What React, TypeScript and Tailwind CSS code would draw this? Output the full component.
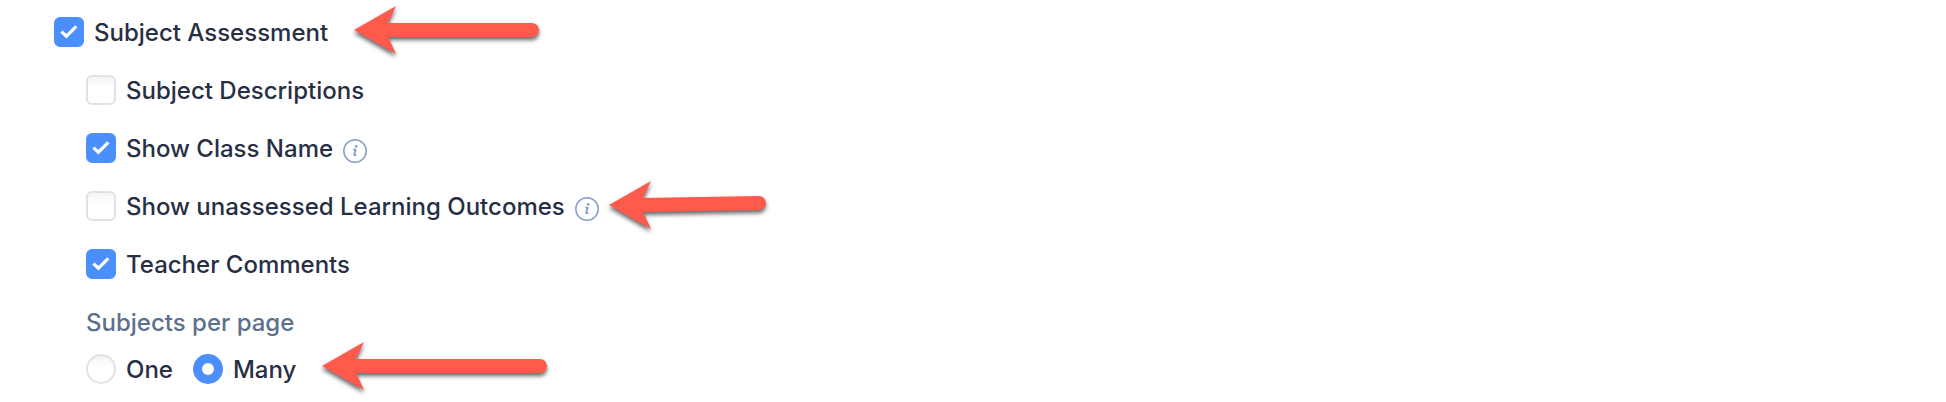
import { useState } from 'react'
import type { ReactNode } from 'react'

const choiceBox =
    'h-[30px] w-[30px] shrink-0 appearance-none border-2 border-[#e2e2e2] bg-white bg-linear-to-b from-[#f4f4f4] to-white to-40% checked:border-[#4a8ffc] checked:bg-[#4a8ffc] checked:bg-none'

interface ArrowProps {
    length: number
    tilt?: number
}

// Red pointer arrow, the tail can sit a little higher than the tip
function Arrow({ length, tilt = 0 }: ArrowProps) {
    const end = length - 7
    return (
        <svg
            width={length}
            height={52}
            viewBox={`0 0 ${length} 52`}
            className="shrink-0 overflow-visible drop-shadow-[0_3px_2px_rgba(0,0,0,0.6)]"
            aria-hidden="true"
        >
            <path
                fill="#ff5a4c"
                d={`M0 24 L42 0 L34 17 L${end} ${17 - tilt} A7 7 0 0 1 ${end} ${31 - tilt} L34 31 L42 48 Z`}
            />
        </svg>
    )
}

function InfoIcon() {
    return (
        <svg width="24" height="24" viewBox="0 0 24 24" fill="none" className="mt-[6px] ml-[10px] shrink-0" aria-hidden="true">
            <circle cx="12" cy="12" r="11.2" stroke="#839fc6" strokeWidth="1.5" />
            <circle cx="13.2" cy="7.4" r="1.3" fill="#839fc6" />
            <path d="M10.2 10.7h2.4l-1.4 5.4h2.2" stroke="#839fc6" strokeWidth="1.8" strokeLinejoin="round" />
        </svg>
    )
}

interface CheckRowProps {
    label: string
    defaultChecked?: boolean
    children?: ReactNode
}

function CheckRow({ label, defaultChecked = false, children }: CheckRowProps) {
    const [checked, setChecked] = useState(defaultChecked)

    return (
        <div className="flex h-[30px] items-center">
            <label className="flex items-center gap-[10px] whitespace-nowrap">
                <span className="relative h-[30px] w-[30px] shrink-0">
                    <input
                        type="checkbox"
                        checked={checked}
                        onChange={(e) => setChecked(e.target.checked)}
                        className={`${choiceBox} block rounded-md`}
                    />
                    {checked && (
                        <svg viewBox="0 0 30 30" fill="none" className="pointer-events-none absolute inset-0" aria-hidden="true">
                            <path d="M7.5 14.6l4.9 4.6L22.3 9.3" stroke="white" strokeWidth="3.2" />
                        </svg>
                    )}
                </span>
                <span className="pt-0.5">{label}</span>
            </label>
            {children}
        </div>
    )
}

export default function App() {
    const [perPage, setPerPage] = useState('Many')

    return (
        <main className="bg-white pt-[17px] pb-[18px] pl-[54px] font-['Inter',sans-serif] text-2xl leading-[30px] font-medium text-[#272f45]">
            <div className="flex flex-col gap-7">
                <CheckRow label="Subject Assessment" defaultChecked>
                    <div className="ml-[26px] flex">
                        <Arrow length={185} />
                    </div>
                </CheckRow>

                <div className="flex flex-col gap-7 pl-8">
                    <CheckRow label="Subject Descriptions" />
                    <CheckRow label="Show Class Name" defaultChecked>
                        <InfoIcon />
                    </CheckRow>
                    <CheckRow label="Show unassessed Learning Outcomes">
                        <InfoIcon />
                        <div className="ml-[10px] flex pt-0.5">
                            <Arrow length={157} tilt={2} />
                        </div>
                    </CheckRow>
                    <CheckRow label="Teacher Comments" defaultChecked />

                    <fieldset>
                        <legend className="pt-px text-[#5c708c]">Subjects per page</legend>
                        <div className="mt-4 flex h-[30px] items-center gap-5">
                            {['One', 'Many'].map((option) => (
                                <label key={option} className="flex items-center gap-[10px]">
                                    <input
                                        type="radio"
                                        name="perPage"
                                        value={option}
                                        checked={perPage === option}
                                        onChange={() => setPerPage(option)}
                                        className={`${choiceBox} rounded-full checked:border-9 checked:bg-white`}
                                    />
                                    <span className="pt-0.5">{option}</span>
                                </label>
                            ))}
                            <div className="ml-[6px] flex pb-0.5">
                                <Arrow length={225} />
                            </div>
                        </div>
                    </fieldset>
                </div>
            </div>
        </main>
    )
}
